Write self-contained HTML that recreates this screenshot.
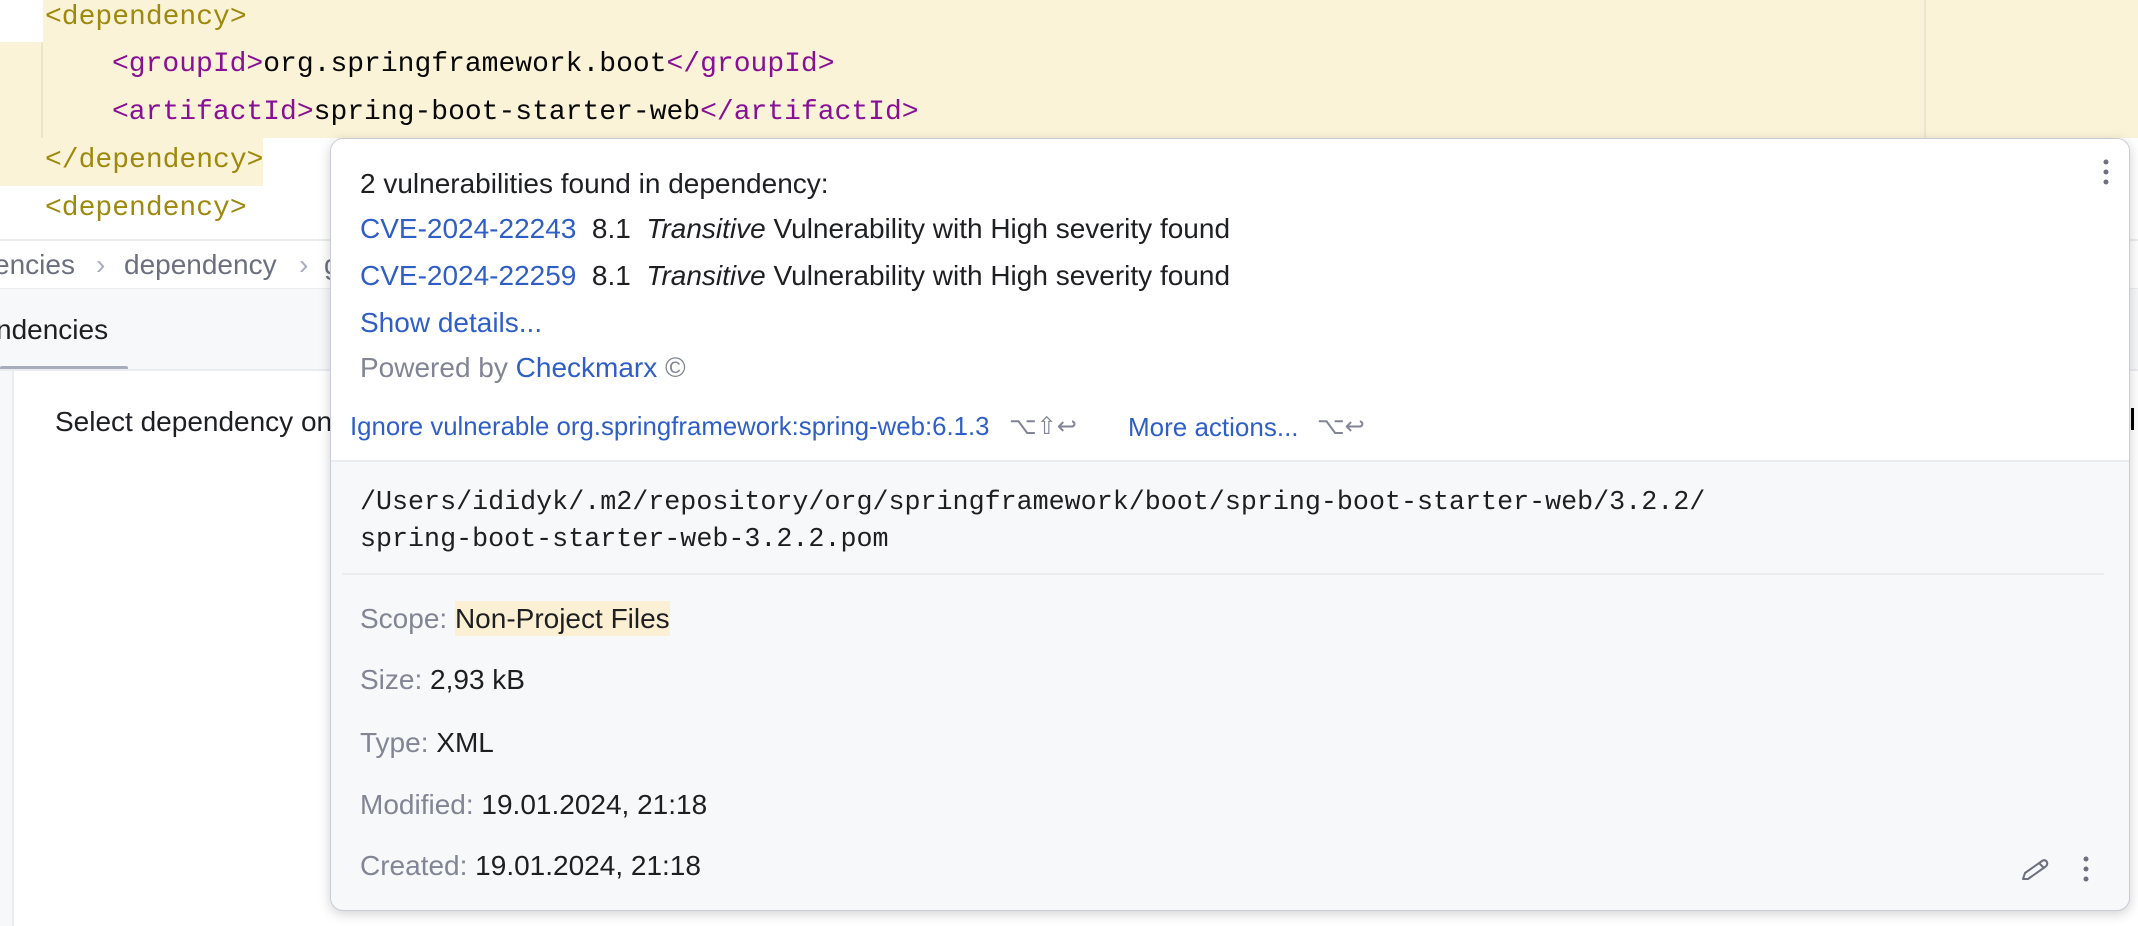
<!DOCTYPE html>
<html><head><meta charset="utf-8"><style>
*{margin:0;padding:0;box-sizing:border-box}
body{width:2138px;height:926px;overflow:hidden;background:#fff;position:relative;font-family:"Liberation Sans",sans-serif;}
.a{position:absolute;white-space:nowrap}
.code{font-family:"Liberation Mono",monospace;font-size:28px;line-height:48px;color:#080808}
.ty{color:#9e880d}.tm{color:#871094}
.ui{font-size:28px;line-height:40px;color:#1e1f22}
.lk{color:#2f5fc6}.gr{color:#818594}
.mono{font-family:"Liberation Mono",monospace;font-size:26.7px;line-height:40px;color:#1e1f22}
</style></head><body>
<div class="a" style="left:0;top:0;width:2138px;height:138px;background:#faf3d7"></div>
<div class="a" style="left:0;top:0;width:43px;height:42px;background:#fff"></div>
<div class="a" style="left:0;top:138px;width:263px;height:48px;background:#faf3d7"></div>
<div class="a" style="left:41px;top:42px;width:2px;height:96px;background:#ece5c8"></div>
<div class="a" style="left:1924px;top:0;width:2px;height:138px;background:#ebe6d4"></div>
<div class="a code" style="left:45px;top:-6px"><span class="ty">&lt;dependency&gt;</span></div>
<div class="a code" style="left:112px;top:41px"><span class="tm">&lt;groupId&gt;</span>org.springframework.boot<span class="tm">&lt;/groupId&gt;</span></div>
<div class="a code" style="left:112px;top:89px"><span class="tm">&lt;artifactId&gt;</span>spring-boot-starter-web<span class="tm">&lt;/artifactId&gt;</span></div>
<div class="a code" style="left:45px;top:137px"><span class="ty">&lt;/dependency&gt;</span></div>
<div class="a code" style="left:45px;top:185px"><span class="ty">&lt;dependency&gt;</span></div>
<div class="a" style="left:0;top:239px;width:2138px;height:2px;background:#ebecf0"></div>
<div class="a ui" style="left:-6px;top:245px;color:#6c707e">encies</div>
<div class="a ui" style="left:96px;top:245px;color:#a8adbd">›</div>
<div class="a ui" style="left:124px;top:245px;color:#6c707e">dependency</div>
<div class="a ui" style="left:299px;top:245px;color:#a8adbd">›</div>
<div class="a ui" style="left:324px;top:245px;color:#6c707e">g</div>
<div class="a" style="left:0;top:288px;width:2138px;height:82px;background:#f7f8fa"></div>
<div class="a" style="left:0;top:288px;width:2138px;height:1px;background:#ebecf0"></div>
<div class="a ui" style="left:-4px;top:310px">ndencies</div>
<div class="a" style="left:0;top:366px;width:128px;height:4px;background:#a8adbd;border-radius:2px"></div>
<div class="a" style="left:0;top:369px;width:2138px;height:2px;background:#ebecf0"></div>
<div class="a" style="left:0;top:371px;width:12px;height:555px;background:#f7f8fa"></div>
<div class="a" style="left:12px;top:371px;width:2px;height:555px;background:#ebecf0"></div>
<div class="a ui" style="left:55px;top:402px">Select dependency on</div>
<div class="a" style="left:2131px;top:408px;width:3px;height:22px;background:#000"></div>
<div class="a" style="left:330px;top:138px;width:1800px;height:773px;background:#f7f8fa;border-radius:13px;border:1px solid #c9ccd6;box-shadow:0 3px 12px rgba(0,0,0,.18);overflow:hidden">
 <div style="position:absolute;left:0;top:0;width:100%;height:323px;background:#fff;border-bottom:2px solid #ebecf0"></div>
</div>
<div class="a ui" style="left:360px;top:164px">2 vulnerabilities found in dependency:</div>
<div class="a ui" style="left:360px;top:209px"><span class="lk">CVE-2024-22243</span>&nbsp; 8.1&nbsp; <i>Transitive</i> Vulnerability with High severity found</div>
<div class="a ui" style="left:360px;top:256px"><span class="lk">CVE-2024-22259</span>&nbsp; 8.1&nbsp; <i>Transitive</i> Vulnerability with High severity found</div>
<div class="a ui lk" style="left:360px;top:303px">Show details...</div>
<div class="a ui" style="left:360px;top:348px"><span class="gr">Powered by</span> <span class="lk">Checkmarx</span> <span class="gr">©</span></div>
<div class="a ui lk" style="left:350px;top:407px;font-size:25.8px">Ignore vulnerable org.springframework:spring-web:6.1.3</div>
<div class="a ui gr" style="left:1009px;top:407px;font-size:24px">⌥⇧↩</div>
<div class="a ui lk" style="left:1128px;top:407px;font-size:26px">More actions...</div>
<div class="a ui gr" style="left:1317px;top:407px;font-size:24px">⌥↩</div>
<svg class="a" style="left:2098px;top:158px" width="16" height="30"><circle cx="8" cy="4" r="2.5" fill="#6c707e"/><circle cx="8" cy="14" r="2.5" fill="#6c707e"/><circle cx="8" cy="24" r="2.5" fill="#6c707e"/></svg>
<div class="a mono" style="left:360px;top:483px">/Users/ididyk/.m2/repository/org/springframework/boot/spring-boot-starter-web/3.2.2/</div>
<div class="a mono" style="left:360px;top:520px">spring-boot-starter-web-3.2.2.pom</div>
<div class="a" style="left:342px;top:573px;width:1762px;height:2px;background:#ebecf0"></div>
<div class="a ui" style="left:360px;top:599px"><span class="gr">Scope:</span> <span style="background:#fcf0d4;padding:2px 0">Non-Project Files</span></div>
<div class="a ui" style="left:360px;top:660px"><span class="gr">Size:</span> 2,93 kB</div>
<div class="a ui" style="left:360px;top:723px"><span class="gr">Type:</span> XML</div>
<div class="a ui" style="left:360px;top:785px"><span class="gr">Modified:</span> 19.01.2024, 21:18</div>
<div class="a ui" style="left:360px;top:846px"><span class="gr">Created:</span> 19.01.2024, 21:18</div>
<svg class="a" style="left:2020px;top:855px" width="30" height="28" viewBox="0 0 30 28"><path d="M3 24 L5 18 L22 6 Q25 4 27 7 Q28 10 25 12 L8 24 Z M19 8 L24 13" fill="none" stroke="#6c707e" stroke-width="2" stroke-linejoin="round"/></svg>
<svg class="a" style="left:2078px;top:855px" width="16" height="30"><circle cx="8" cy="4" r="2.5" fill="#6c707e"/><circle cx="8" cy="14" r="2.5" fill="#6c707e"/><circle cx="8" cy="24" r="2.5" fill="#6c707e"/></svg>
</body></html>
